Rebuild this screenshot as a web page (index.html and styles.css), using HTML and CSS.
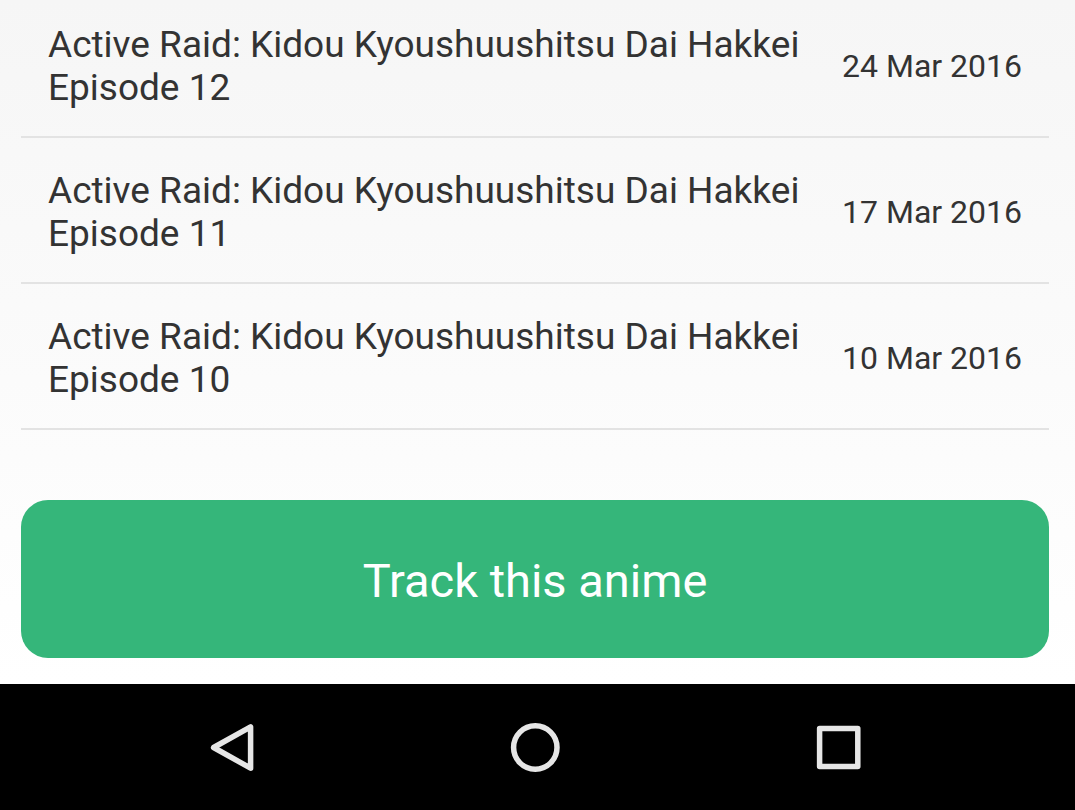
FILE: index.html
```html
<!DOCTYPE html>
<html lang="en">
<head>
<meta charset="utf-8">
<meta name="viewport" content="width=device-width, initial-scale=1">
<title>Active Raid: Kidou Kyoushuushitsu Dai Hakkei</title>
<link rel="stylesheet" href="styles.css">
</head>
<body>
<main class="content">
  <ul class="episodes">
    <li class="episode"><span class="title">Active Raid: Kidou Kyoushuushitsu Dai Hakkei Episode 12</span><time class="date" datetime="2016-03-24">24 Mar 2016</time></li>
    <li class="episode"><span class="title">Active Raid: Kidou Kyoushuushitsu Dai Hakkei Episode 11</span><time class="date" datetime="2016-03-17">17 Mar 2016</time></li>
    <li class="episode"><span class="title">Active Raid: Kidou Kyoushuushitsu Dai Hakkei Episode 10</span><time class="date" datetime="2016-03-10">10 Mar 2016</time></li>
  </ul>
  <button class="track" type="button">Track this anime</button>
</main>
<nav class="navbar" aria-label="System navigation">
  <button class="key" type="button" aria-label="Back"><svg viewBox="0 0 56 56"><path d="M46.6 7.8v41.4L9.6 28.5z"/></svg></button>
  <button class="key" type="button" aria-label="Home"><svg viewBox="0 0 56 56"><circle cx="28.3" cy="28.5" r="21.7"/></svg></button>
  <button class="key" type="button" aria-label="Recent apps"><svg viewBox="0 0 56 56"><rect x="9.6" y="9.4" width="38.2" height="38.2"/></svg></button>
</nav>
</body>
</html>
```
FILE: styles.css
```css
* {
  box-sizing: border-box;
}

body {
  margin: 0;
  min-height: 100vh;
  display: flex;
  flex-direction: column;
  background: #000;
  color: #333;
  font-family: Roboto, sans-serif;
}

.content {
  flex: 1;
  padding: 0 26px 26px 21px;
  background: linear-gradient(#f6f6f6, #fff);
}

.episodes {
  margin: 0;
  padding: 0;
  list-style: none;
}

.episode {
  display: flex;
  align-items: center;
  justify-content: space-between;
  gap: 32px;
  min-height: 146px;
  padding: 4px 27px 0;
  border-bottom: 2px solid #e3e3e3;
}

.episode:first-child {
  min-height: 138px;
  padding: 0 27px 4px;
}

.title {
  flex: 1;
  font-size: 37px;
  line-height: 43px;
}

.date {
  font-size: 32px;
  white-space: nowrap;
}

.track {
  display: block;
  width: 100%;
  height: 158px;
  margin-top: 70px;
  padding: 2px 0 0;
  border: 0;
  border-radius: 27px;
  background: #35b67a;
  color: #fff;
  font: 47px Roboto, sans-serif;
}

.navbar {
  display: flex;
  justify-content: space-around;
  align-items: center;
  height: 126px;
  padding: 0 85px 0 80px;
  background: #000;
}

.key {
  padding: 0;
  border: 0;
  background: none;
}

.key svg {
  display: block;
  width: 56px;
  height: 56px;
  fill: none;
  stroke: #e6e6e6;
  stroke-width: 5.5;
  stroke-linejoin: round;
}
```
